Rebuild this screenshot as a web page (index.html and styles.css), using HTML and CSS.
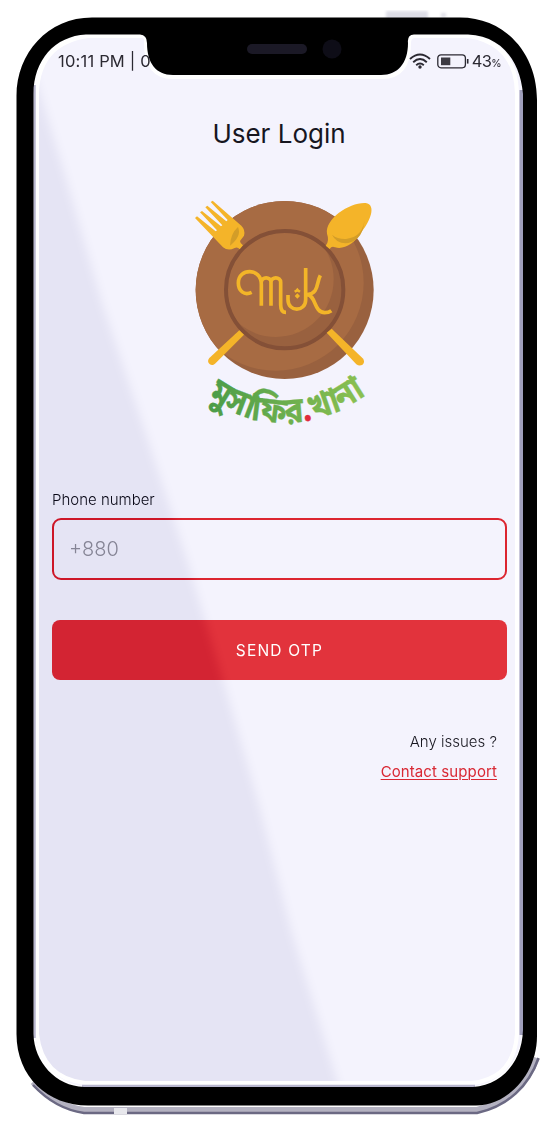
FILE: index.html
```html
<!DOCTYPE html>
<html lang="en">
<head>
<meta charset="utf-8">
<title>User Login</title>
<link rel="stylesheet" href="styles.css">
</head>
<body>
<div class="phone">
  <main class="screen">
    <header class="status">
      <span class="clock">10:11 PM | 0</span>
      <span class="indicators">
        <svg class="wifi" viewBox="0 0 22 16"><g fill="none" stroke="#2b2932" stroke-width="1.9"><path d="M1 6Q11-3 21 6"/><path d="M4.2 9.2Q11 3 17.8 9.2"/><path d="M7.2 12.2Q11 8.7 14.8 12.2"/></g><circle cx="11" cy="14" r="1.7" fill="#2b2932"/></svg>
        <svg class="battery" viewBox="0 0 32 15"><rect x=".8" y=".8" width="27.6" height="13" rx="3.2" fill="none" stroke="#2b2932" stroke-width="1.3"/><rect x="4" y="3.5" width="9.3" height="7.7" fill="#3c3a43"/><path d="M30.7 5v4.6" stroke="#2b2932" stroke-width="1.6"/></svg>
        <span class="level">43<small>%</small></span>
      </span>
    </header>
    <h1 class="title">User Login</h1>
    <svg class="logo" viewBox="0 0 630 750">
      <defs>
        <clipPath id="plate"><circle cx="314" cy="315" r="267"/></clipPath>
        <clipPath id="well"><circle cx="314" cy="314" r="171"/></clipPath>
        <linearGradient id="leaf" gradientUnits="userSpaceOnUse" x1="85" y1="0" x2="555" y2="0"><stop offset="0" stop-color="#4b9c49"/><stop offset="1" stop-color="#8cc152"/></linearGradient>
        <path id="arc" d="M56 619A396 396 0 0 0 582 608"/>
      </defs>
      <circle cx="314" cy="315" r="267" fill="#99613f"/>
      <circle cx="287" cy="293" r="264" fill="#a76b43" clip-path="url(#plate)"/>
      <circle cx="314" cy="314" r="176" fill="#99613f"/>
      <circle cx="288" cy="283" r="173" fill="#a76b43" clip-path="url(#well)"/>
      <circle cx="314" cy="314" r="176" fill="none" stroke="#845037" stroke-width="12"/>
      <g fill="#f4b429">
        <path d="M45 99L51 94L107 139L111 136L60 82L66 78L123 124L127 121L76 67L82 62L139 109L143 105L92 51L98 47L184 122Q197 135 192 152L180 168Q180 175 189 181L179 193Q173 185 164 189Q145 199 129 187Z"/>
        <path d="M437 182Q449 168 441 146C435 100 510 51 557 54C590 59 571 108 546 139C522 179 491 194 465 187Q455 182 449 192Z"/>
        <path d="M178 436L192 449L105 536C93 548 77 531 88 519Z"/>
        <path d="M440 443L455 431L548 520C560 534 543 549 529 538Z"/>
      </g>
      <path d="M174 126Q186 153 150 182Q152 145 174 126Z" fill="#d39d28"/>
      <path d="M554 94Q554 155 498 162Q473 163 456 149Q470 178 505 174Q553 164 554 94Z" fill="#d39d28"/>
      <g fill="none" stroke="#f3b528" stroke-width="11">
        <path d="M215 322C192 333 175 317 175 294C175 249 244 247 244 298V362M244 292C244 274 273 274 273 292V362M273 292C273 274 302 274 302 292V359Q302 382 318 382"/>
        <path d="M324 330V344C324 382 377 382 377 344V249M421 271C409 293 417 325 382 329C408 331 401 382 434 383Q446 383 454 377"/>
      </g>
      <path d="M352 308l5 6 5 3-4 6-6-3-6 3-4-6 5-3zM352 325l8 8-8 8-8-8z" fill="#f3b528"/>
      <text class="wordmark" fill="url(#leaf)" stroke="url(#leaf)"><textPath href="#arc" startOffset="32" textLength="512" lengthAdjust="spacingAndGlyphs">মুসাফির<tspan class="dot">.</tspan>খানা</textPath></text>
    </svg>
    <form class="login">
      <label class="label" for="phone">Phone number</label>
      <input class="field" id="phone" type="tel" placeholder="+880">
      <button class="send" type="button">SEND OTP</button>
    </form>
    <footer class="help">
      <span>Any issues ?</span>
      <a class="support" href="#">Contact support</a>
    </footer>
  </main>
  <svg class="sheen" viewBox="0 0 560 1128"><defs><filter id="soft" color-interpolation-filters="sRGB"><feGaussianBlur stdDeviation="5"/></filter><clipPath id="glass"><rect x="38" y="38" width="477" height="1046" rx="52"/></clipPath></defs><g clip-path="url(#glass)"><path d="M10 0L40 93L65 175L102 303L148 440L187 560L226 690L259 805L291 930L346 1110L0 1110Z" fill="#0f0f09" filter="url(#soft)"/></g></svg>
  <svg class="frame" viewBox="0 0 560 1128">
    <defs><filter id="edge" x="0" y="0" width="560" height="1128" filterUnits="userSpaceOnUse" color-interpolation-filters="sRGB"><feGaussianBlur stdDeviation=".7"/></filter><filter id="blur" color-interpolation-filters="sRGB"><feGaussianBlur stdDeviation="1.5"/></filter></defs>
    <path d="M386 11h42v8h-42zM441 13h5v4h-5z" fill="#dddde6" filter="url(#blur)"/>
    <g filter="url(#edge)" fill="none">
      <path d="M33 1082C47 1097 63 1107 84 1110H477C506 1103 527 1084 537 1058" stroke="#b4b2c1" stroke-width="6"/>
      <path d="M33 1085C47 1100 63 1110 84 1113H477C508 1106 529 1086 538.5 1058" stroke="#6b6983" stroke-width="2.5"/>
      <path d="M114 1111h13" stroke="#e7e7ec" stroke-width="6"/>
      <path d="M88 36H142Q147 36 146 43C146 67 155 77 173 77H382C400 77 409 67 409 43Q409 36 415 36H468Q516 43 517 94V1034Q514 1078 472 1083H85Q42 1078 37 1034V92Q39 43 88 36Z" stroke="#fff" stroke-width="4"/>
      <path d="M521.5 90V1035" stroke="#9f9ebb" stroke-width="4"/>
      <path d="M34.5 85V1038M82 1086H475" stroke="#b8b6ce" stroke-width="2.5"/>
      <path fill="#000" fill-rule="evenodd" d="M92 17.5H460C504 17.5 537 52 537 100V1036C537 1075 507 1105.5 476 1105.5H88C48 1105.5 16.5 1077 16.5 1034V96C16.5 53 48 17.5 92 17.5ZM86 34.5C55 36 33.5 60 33.5 94V1034C34 1062 56 1086 84 1087H473C502 1085 522 1062 523 1030V94C520 60 501 36 468 34.5H414Q407 35 408 43C408 63 398 75 381 75H173C156 75 147 63 147 43Q147 35 140 34.5Z"/>
      <rect x="247" y="44" width="60" height="10" rx="5" fill="#1b1926"/>
      <circle cx="332" cy="49" r="9.5" fill="#0e0d17"/>
    </g>
  </svg>
</div>
</body>
</html>
```
FILE: styles.css
```css
body {
  margin: 0;
  background: #fff;
  font-family: Inter, "Open Sans", sans-serif;
  color: #17161f;
}
.phone {
  position: relative;
  width: 560px;
  height: 1128px;
  overflow: hidden;
  isolation: isolate;
}
.screen {
  box-sizing: border-box;
  width: 487px;
  height: 1052px;
  margin: 35px 0 0 35px;
  padding: 14px 14px 0 17px;
  border-radius: 56px;
  background: #f4f3fd;
  display: flex;
  flex-direction: column;
}
.phone::before { content: ""; display: table; }
.status {
  position: relative;
  z-index: 1;
  height: 24px;
  display: flex;
  align-items: center;
  justify-content: space-between;
  padding: 0 7px 0 6px;
  font-size: 16.5px;
  color: #2b2932;
}
.clock { letter-spacing: 0.2px; }
.indicators { display: flex; align-items: center; }
.wifi { width: 22px; height: 16px; margin-right: 6px; }
.battery { width: 32px; height: 15px; margin-right: 3px; }
.level { letter-spacing: -0.6px; }
.level small { font-size: 10.5px; }
.title {
  margin: 44px 0 0 -2px;
  text-align: center;
  font-size: 26px;
  line-height: 34px;
  font-weight: 400;
}
.logo {
  width: 210px;
  height: 250px;
  margin: 34px 0 0 128px;
  overflow: visible;
}
.wordmark {
  font-family: "Noto Sans Bengali", "Lohit Bengali", FreeSans, "Noto Sans", sans-serif;
  font-size: 108px;
  font-weight: 700;
  stroke-width: 1px;
}
.dot { fill: #e02b3d; stroke: #e02b3d; }
.login { display: flex; flex-direction: column; margin-top: 55px; }
.label { font-size: 15px; line-height: 20px; font-weight: 300; }
.field {
  box-sizing: border-box;
  width: 455px;
  height: 62px;
  margin: 8px 0 0;
  padding: 0 15px;
  border: 2.5px solid #dc2530;
  border-radius: 9px;
  background: transparent;
  font: 300 20px Inter, sans-serif;
}
.field::placeholder { color: #94939e; opacity: 1; }
.send {
  width: 455px;
  height: 60px;
  margin: 40px 0 0;
  padding: 0;
  border: 0;
  border-radius: 8px;
  background: #e2333c;
  color: #fff;
  font: 400 15.5px Inter, sans-serif;
  letter-spacing: 1.2px;
}
.help {
  display: flex;
  flex-direction: column;
  align-items: flex-end;
  margin-top: 52px;
  padding-right: 11px;
  font-size: 15px;
  line-height: 20px;
  font-weight: 300;
  gap: 10px;
}
.support { color: #d92834; font-weight: 400; letter-spacing: 0.1px; text-underline-offset: 2px; text-decoration-thickness: 1px; }
.sheen, .frame {
  position: absolute;
  left: 0;
  top: 0;
  width: 560px;
  height: 1128px;
  pointer-events: none;
}
.sheen { mix-blend-mode: difference; }
```
